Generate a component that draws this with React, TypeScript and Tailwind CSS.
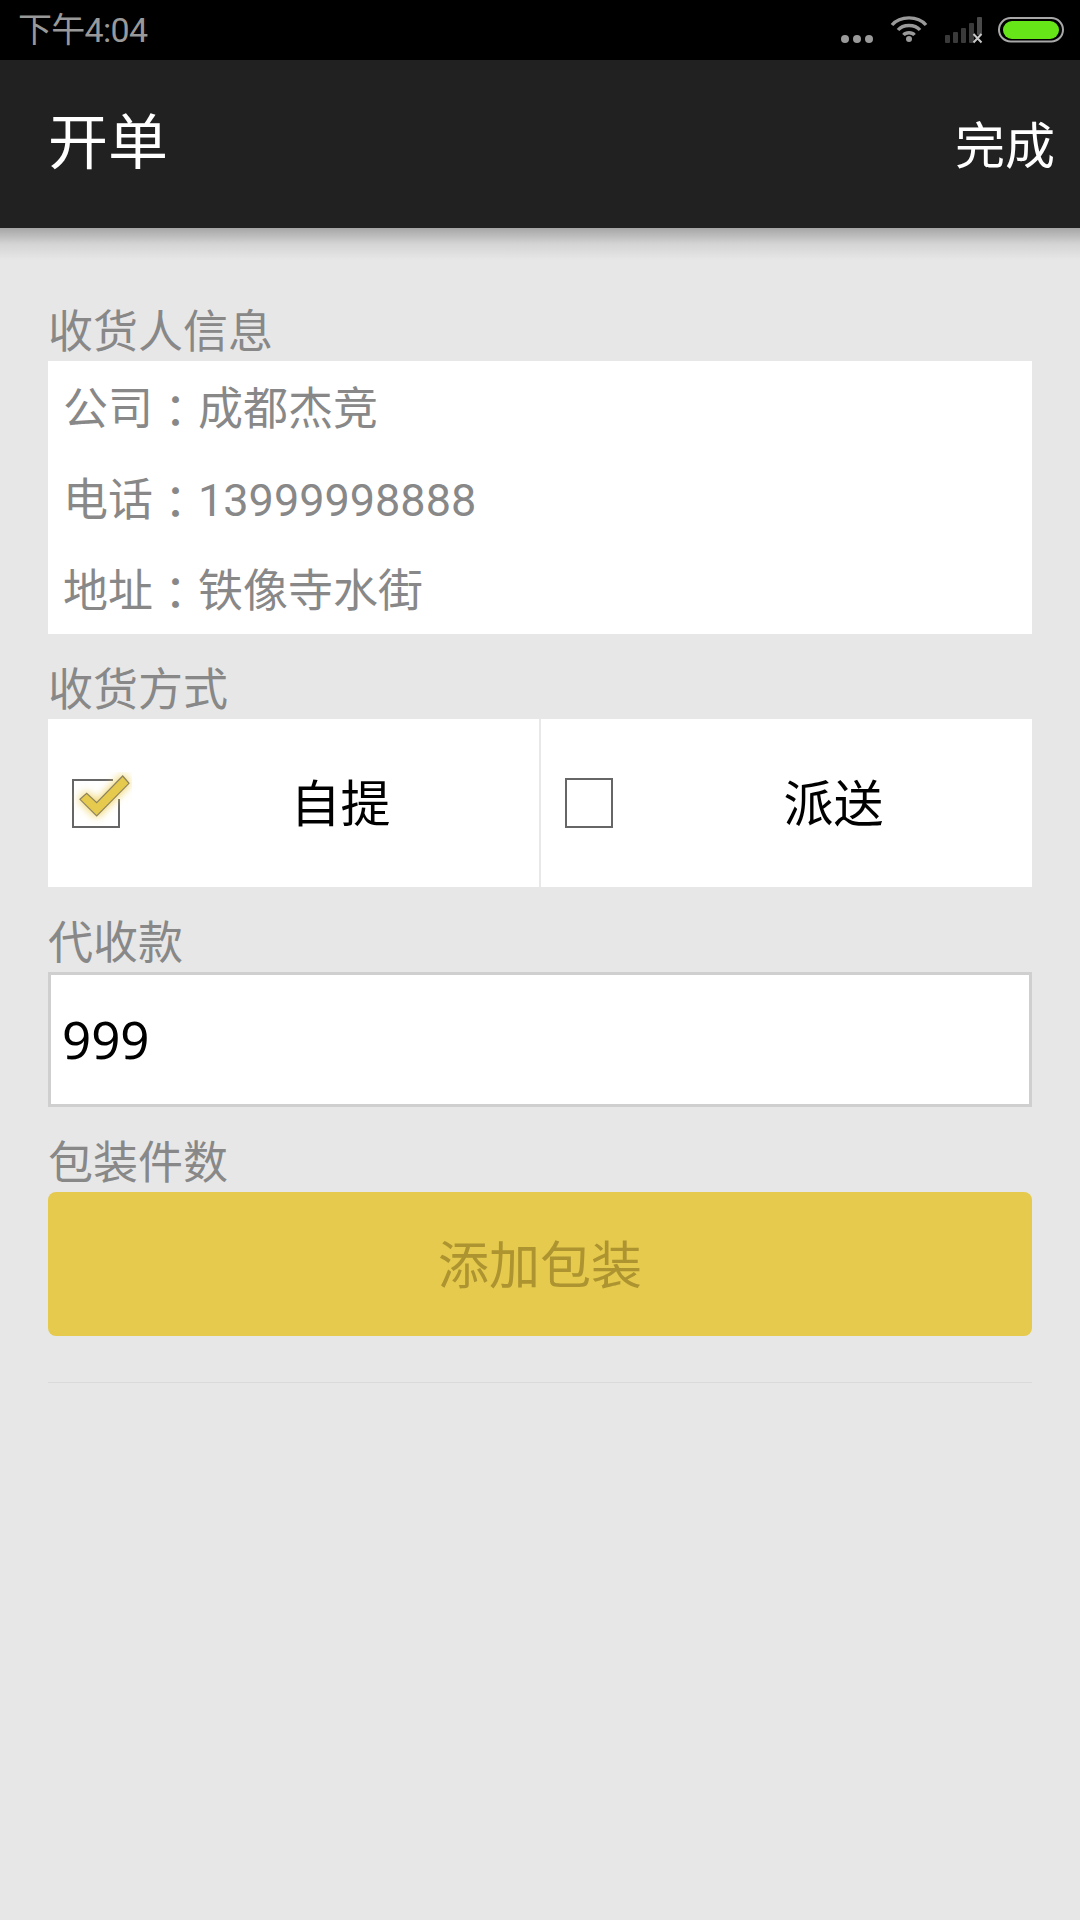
const cjk = "font-['Roboto','Noto_Sans_CJK_SC',sans-serif]"

function StatusIcons() {
  return (
    <svg width="224" height="60" viewBox="0 0 224 60" className="shrink-0">
      {/* dots */}
      <circle cx="5" cy="39" r="4" fill="#9a9a9a" />
      <circle cx="17" cy="39" r="4" fill="#9a9a9a" />
      <circle cx="29" cy="39" r="4" fill="#9a9a9a" />
      {/* wifi */}
      <g fill="none" stroke="#9a9a9a" strokeWidth="3.4">
        <path d="M52 25 C60 15.500 78 15.500 86 25" />
        <path d="M58 30 C63 24 75 24 80 30" />
        <path d="M63.500 35 C66 32 72 32 74.500 35" />
      </g>
      <circle cx="69" cy="39" r="3" fill="#9a9a9a" />
      {/* signal */}
      <rect x="105" y="35" width="5" height="8" rx="1" fill="#3a3a3a" />
      <rect x="113" y="32" width="5" height="11" rx="1" fill="#3a3a3a" />
      <rect x="121" y="28" width="5" height="15" rx="1" fill="#3a3a3a" />
      <rect x="129" y="23" width="5" height="20" rx="1" fill="#3a3a3a" />
      <rect x="137" y="17" width="5" height="18" rx="1" fill="#4a4a4a" />
      <path d="M133.500 34 L141.500 42.500 M141.500 34 L133.500 42.500" stroke="#c8c8c8" strokeWidth="2" />
      {/* battery */}
      <rect x="159" y="18" width="64" height="23.500" rx="11.700" fill="#000" stroke="#a8a8a8" strokeWidth="2" />
      <rect x="163" y="21" width="56" height="18" rx="9" fill="#66e619" />
    </svg>
  )
}

function Label({ text, first }: { text: string; first?: boolean }) {
  return (
    <div className={`h-[58px] flex items-center pt-[2px] text-[45px] text-[#888888] ${first ? '' : 'mt-[27px]'}`}>
      {text}
    </div>
  )
}

function InfoRow({ name, value }: { name: string; value: string }) {
  return (
    <div className="h-[91px] flex items-center pt-[3px]">
      <span>
        {name}
        <span className="inline-block translate-y-[3px] font-['Noto_Sans_CJK_TC',sans-serif]">：</span>
        {value}
      </span>
    </div>
  )
}

function CheckBox({ checked }: { checked?: boolean }) {
  return (
    <svg width="60" height="60" viewBox="0 0 60 60" className="shrink-0 -mt-[2px]">
      {checked ? (
        <>
          <defs>
            <filter id="glow" x="-40%" y="-40%" width="180%" height="180%">
              <feGaussianBlur stdDeviation="4" />
            </filter>
          </defs>
          <path d="M41 8 H1 V55 H47 V27" fill="none" stroke="#666666" strokeWidth="2" />
          <path d="M8 27.300 L14.700 21.300 L24.700 30.700 L50.700 4 L57 11.300 L24.700 44 Z" fill="#f0d468" stroke="#f0d468" strokeWidth="3" filter="url(#glow)" />
          <path d="M8 27.300 L14.700 21.300 L24.700 30.700 L50.700 4 L57 11.300 L24.700 44 Z" fill="#e5ca4e" stroke="#8d8360" strokeWidth="1.200" />
        </>
      ) : (
        <rect x="1" y="7" width="46" height="48" fill="none" stroke="#666666" strokeWidth="2" />
      )}
    </svg>
  )
}

function Option({ text, checked }: { text: string; checked?: boolean }) {
  return (
    <div className="flex-1 flex items-center pl-[24px]">
      <CheckBox checked={checked} />
      <div className="flex-1 text-center pl-[10px] pt-[4px] text-[50px] text-black">{text}</div>
    </div>
  )
}

export default function App() {
  return (
    <div className={`w-[1080px] min-h-[1920px] bg-[#e7e7e7] ${cjk}`}>
      {/* Status bar */}
      <div className="h-[60px] bg-black flex items-center justify-between pl-[18px] pr-[16px]">
        <span className="text-[34px] text-[#999999] tracking-[-0.7px]">下午4:04</span>
        <StatusIcons />
      </div>

      {/* Header */}
      <div className="h-[168px] bg-[#212121] flex items-center justify-between pl-[48px] pr-[25px] text-white">
        <span className="text-[60px]">开单</span>
        <span className="text-[50px] mt-[6px]">完成</span>
      </div>
      <div className="h-[32px] bg-gradient-to-b from-[#a6a6a6] via-[#d4d4d4] to-[#e7e7e7]" />

      <div className="px-[48px] pt-[43px]">
        <Label text="收货人信息" first />
        <div className="bg-white pl-[15px] text-[45px] text-[#888888]">
          <InfoRow name="公司" value="成都杰竞" />
          <InfoRow name="电话" value="13999998888" />
          <InfoRow name="地址" value="铁像寺水街" />
        </div>

        <Label text="收货方式" />
        <div className="h-[168px] bg-white flex divide-x-2 divide-[#e8e8e8]">
          <Option text="自提" checked />
          <Option text="派送" />
        </div>

        <Label text="代收款" />
        <div className="h-[135px] bg-white border-[3px] border-[#cfcfcf] flex items-center pl-[11px] text-[51px] text-black font-['Noto_Sans',sans-serif]">
          999
        </div>

        <Label text="包装件数" />
        <div className="h-[144px] bg-[#e5ca4e] rounded-[8px] flex items-center justify-center pt-[6px] text-[51px] text-[#ad9430]">
          添加包装
        </div>

        <div className="h-[1px] mt-[46px] bg-[#dadada]" />
      </div>
    </div>
  )
}
